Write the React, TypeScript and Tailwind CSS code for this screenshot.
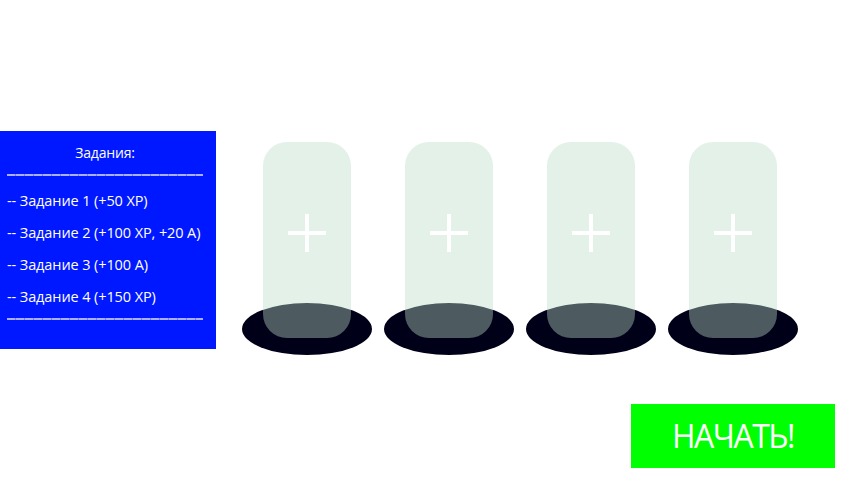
import React from "react";

const Dashes = () => (
  <div className="h-[2px] w-[196px] bg-[repeating-linear-gradient(90deg,#aab0ff_0px,#aab0ff_8px,#6f78ff_8px,#6f78ff_9px)]" />
);

const Slot = () => (
  <div className="relative h-[213px] w-[130px]">
    <div className="absolute bottom-0 left-0 h-[52px] w-[130px] rounded-[50%] bg-[#000018]" />
    <div className="absolute left-[21px] top-0 flex h-[196px] w-[88px] items-start justify-center rounded-[24px] bg-[rgba(188,222,200,0.41)]">
      <svg width="38" height="38" viewBox="0 0 38 38" className="mt-[72px]">
        <rect x="17" y="0" width="4" height="38" fill="white" />
        <rect x="0" y="17" width="38" height="4" fill="white" />
      </svg>
    </div>
  </div>
);

export default function App() {
  return (
    <div className="relative h-[480px] w-[850px] overflow-hidden bg-white" style={{ fontFamily: '"Open Sans", sans-serif' }}>
      <div className="flex pt-[131px]">
        <div className="h-[218px] w-[216px] bg-[#0018ff] px-[7px] pt-[13px] text-white">
          <div className="pr-[6px] text-center text-[14px] font-medium leading-[18px]" style={{ letterSpacing: "-0.2px" }}>Задания:</div>
          <div className="mt-[12px]"><Dashes /></div>
          <div className="mt-[16px] flex flex-col gap-[14px] text-[14.5px] font-medium leading-[18px]" style={{ letterSpacing: "-0.1px" }}>
            <div>-- Задание 1 (+50 XP)</div>
            <div>-- Задание 2 (+100 XP, +20 A)</div>
            <div>-- Задание 3 (+100 A)</div>
            <div>-- Задание 4 (+150 XP)</div>
          </div>
          <div className="mt-[12px]"><Dashes /></div>
        </div>
        <div className="ml-[26px] mt-[11px] flex gap-[12px]">
          <Slot />
          <Slot />
          <Slot />
          <Slot />
        </div>
      </div>
      <div className="flex justify-end pr-[15px] pt-[49px]">
        <button className="flex h-[64px] w-[204px] items-center justify-center bg-[#00ff00] text-[32px] text-white" style={{ fontFamily: '"Open Sans", sans-serif', fontWeight: 400, letterSpacing: "-1.5px" }}>
          НАЧАТЬ!
        </button>
      </div>
    </div>
  );
}
